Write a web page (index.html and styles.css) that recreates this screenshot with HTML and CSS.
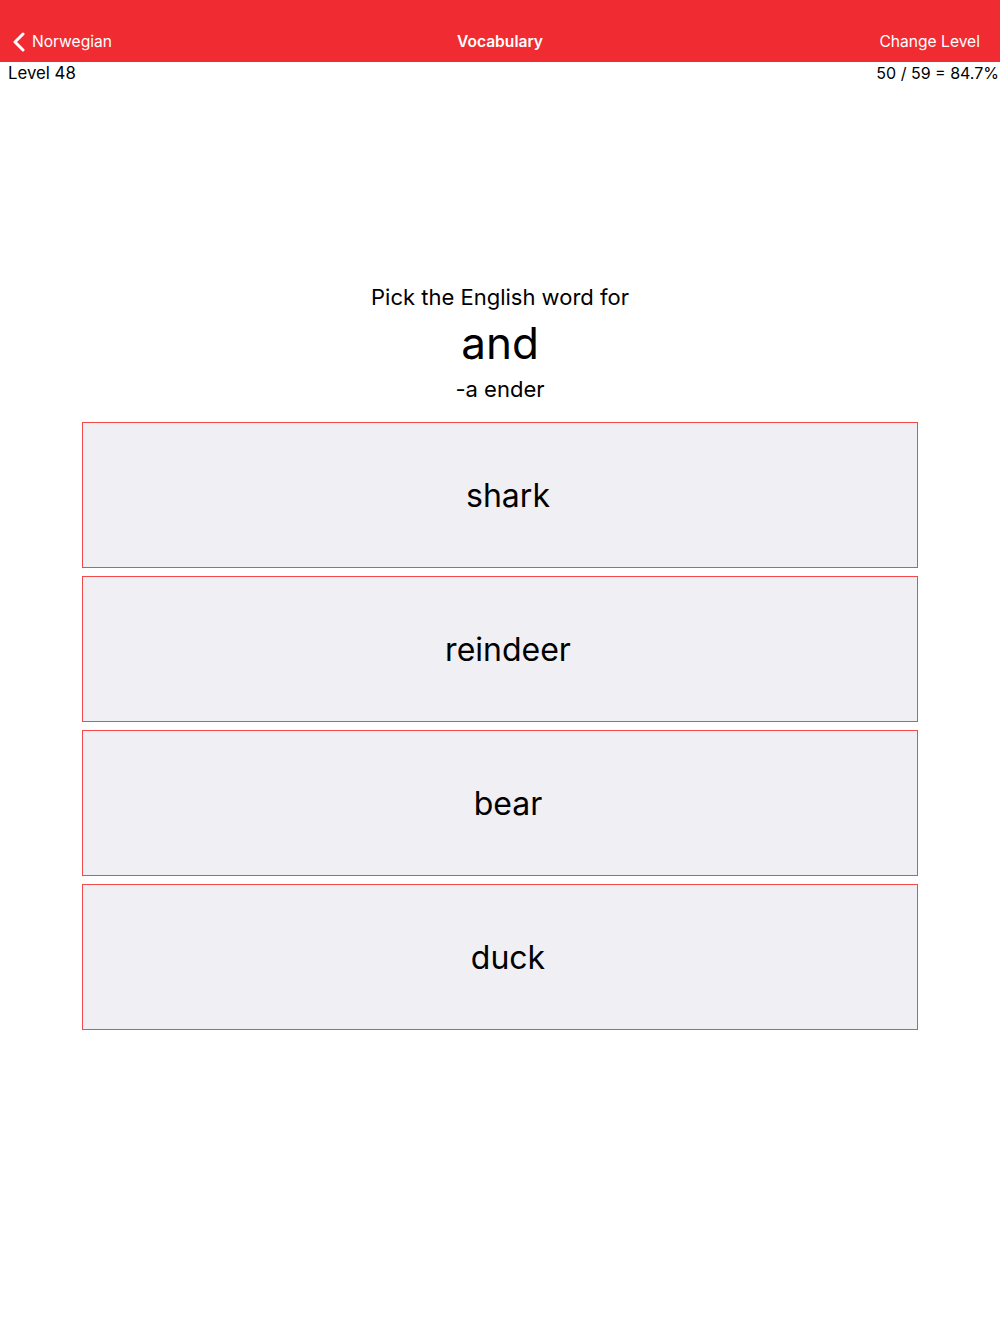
FILE: index.html
```
<!DOCTYPE html>
<html>
<head>
<meta charset="utf-8">
<link rel="stylesheet" href="styles.css">
</head>
<body>
<header class="navbar">
  <a class="nav-back">
    <svg class="chevron" width="14" height="20" viewBox="0 0 14 20"><path d="M11 2 L3 10 L11 18" fill="none" stroke="#fff" stroke-width="3" stroke-linecap="round" stroke-linejoin="round"/></svg>
    <span>Norwegian</span>
  </a>
  <div class="nav-title">Vocabulary</div>
  <a class="nav-right">Change Level</a>
</header>
<div class="status">
  <span>Level 48</span>
  <span class="score">50 / 59 = 84.7%</span>
</div>
<main class="quiz">
  <div class="prompt">Pick the English word for</div>
  <div class="word">and</div>
  <div class="hint">-a ender</div>
  <div class="choices">
    <button class="choice">shark</button>
    <button class="choice">reindeer</button>
    <button class="choice">bear</button>
    <button class="choice">duck</button>
  </div>
</main>
</body>
</html>
```
FILE: styles.css
```
* { box-sizing: border-box; }
html, body { margin: 0; padding: 0; background: #fff; }
body { font-family: Inter, "Noto Sans", "Liberation Sans", sans-serif; color: #000; width: 1000px; }
.navbar {
  height: 62px;
  background: #f02c32;
  color: #fff;
  display: flex;
  align-items: flex-end;
  justify-content: space-between;
  padding: 0 20px 9px 12px;
  position: relative;
  font-size: 15.6px;
}
.nav-back { display: flex; align-items: center; gap: 6px; line-height: 22px; }
.chevron { display: block; margin-top: -1px; }
.nav-title {
  position: absolute;
  left: 0; right: 0; bottom: 9px;
  text-align: center;
  font-weight: 600;
  line-height: 22px;
  pointer-events: none;
}
.nav-right { line-height: 22px; }
.status {
  display: flex;
  justify-content: space-between;
  padding: 0 0 0 8px;
  font-size: 16.8px;
  line-height: 22px;
}
.score { font-size: 16px; padding-right: 1px; }
.quiz { display: flex; flex-direction: column; align-items: center; }
.prompt { margin-top: 200px; font-size: 22px; line-height: 26px; }
.word { margin-top: 5px; font-size: 44px; line-height: 56px; }
.hint { margin-top: 5px; font-size: 22px; line-height: 26px; }
.choices { margin-top: 20px; width: 836px; display: flex; flex-direction: column; gap: 8px; }
.choice {
  height: 146px;
  background: #efeff4;
  border: 1px solid #f04a4a;
  font-family: inherit;
  font-size: 32px;
  color: #000;
  padding: 0 0 0 16px;
  margin: 0;
  text-align: center;
}
```
